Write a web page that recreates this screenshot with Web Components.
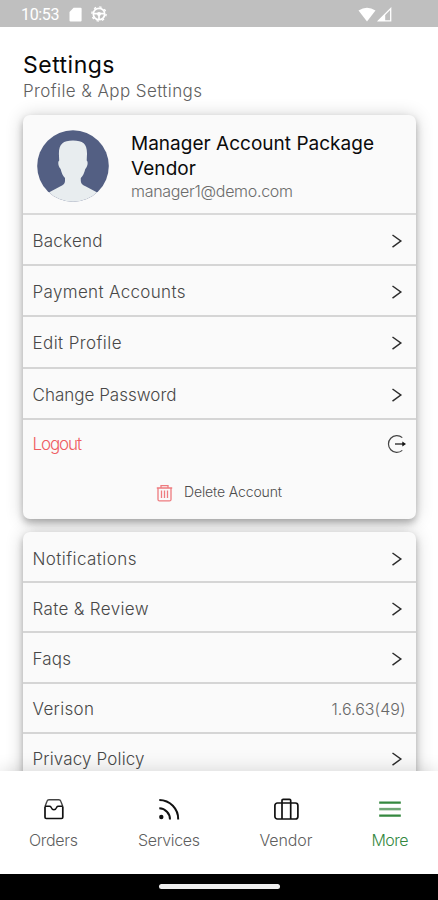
<!DOCTYPE html>
<html lang="en">
<head>
<meta charset="utf-8">
<title>Settings</title>
<style>
html,body{margin:0;padding:0;height:100%;overflow:hidden;background:#fff}
</style>
</head>
<body>
<settings-app></settings-app>
<script>
const define = (name, html, setup) => customElements.define(name, class extends HTMLElement {
  connectedCallback() {
    if (this.shadowRoot) return;
    const t = document.createElement('template');
    t.innerHTML = html;
    this.attachShadow({mode: 'open'}).append(t.content.cloneNode(true));
    if (setup) setup.call(this, this.shadowRoot);
  }
});

/* Single line of text, tracked so that it spans the given width. */
define('fit-text', `<style>
:host{display:block;white-space:nowrap}
span{display:inline-block}
</style><span><slot></slot></span>`, function (root) {
  const span = root.querySelector('span');
  const want = parseFloat(this.getAttribute('span'));
  const n = this.textContent.length;
  const gap = (want - span.getBoundingClientRect().width) / (n - 1);
  span.style.letterSpacing = gap + 'px';
  span.style.marginRight = -gap + 'px';
});

const icons = {
  chevron: [12, 16, '<path d="M1.5 2 9.8 8 1.5 14.2" fill="none" stroke="#2c2c2c" stroke-width="1.5"/>'],
  logout: [20, 20, '<path d="M15.3 3.6A8.4 8.4 0 1 0 15.3 16.4" fill="none" stroke="#444" stroke-width="1.2"/><path d="M8 10h8" stroke="#222" stroke-width="1.3"/><path d="M15.3 7.4 19 10l-3.7 2.6z" fill="#111"/>'],
  trash: [17, 18, '<g fill="none" stroke="#ee7b7f" stroke-width="1.3"><path d="M.8 4h15.4M5 3.6V1.7h7v1.9M2 4.2v11.2q0 1.5 1.5 1.5h10q1.5 0 1.5-1.5V4.2M5.5 6.6v7.5M8.5 6.6v7.5M11.5 6.6v7.5"/></g>'],
  orders: [22, 24, '<g fill="none" stroke="#111" stroke-width="1.7" stroke-linejoin="round"><path d="M2 9.5V20.2q0 1.3 1.3 1.3h15.2q1.3 0 1.3-1.3V9.5"/><path d="M2 9.5 4 4.2Q4.5 2.7 6 2.7h9.8q1.5 0 2 1.5l2 5.3" stroke="#444" stroke-width="1.4"/><path d="M2 9.3h4.4q1.2 0 1.800 1.100Q9 12.700 10.900 12.700t2.700-2.300q.6-1.100 1.800-1.100h4.400" stroke-width="1.400"/></g>'],
  services: [24, 24, '<g fill="none" stroke="#111" stroke-width="2"><path d="M2.3 3A19 19 0 0 1 21.2 22.5"/><path d="M2.3 11.3A11 11 0 0 1 13 22.5"/></g><circle cx="4.3" cy="20" r="2.2" fill="#111"/>'],
  vendor: [27, 24, '<g fill="none" stroke="#111" stroke-width="1.7"><rect x="1.9" y="6" width="23" height="16" rx="2.5"/><path d="M9 22V3.6q0-1.2 1.2-1.2h6.3q1.2 0 1.2 1.2V22"/></g>'],
  more: [24, 24, '<path d="M1.2 5.6h21.6M1.2 18.6h21.6" stroke="#34883f" stroke-width="2.1"/><path d="M1.2 12.1h21.6" stroke="#6fa775" stroke-width="2.5"/>'],
  avatar: [72, 72, '<defs><clipPath id="c"><circle cx="36" cy="36" r="35.8"/></clipPath></defs><g clip-path="url(#c)"><path d="M0 0h72v72H0z" fill="#535f83"/><path d="M36 10.5C26 10.5 21.8 14 21.9 24l.3 6.6c-1.8 1.4-.8 6.2 1.4 8.3 1 4.2 2.2 6.7 4.4 9 .2 5-.2 6.100-4 8L8 64.500v10.500h56v-10.500l-16-8.600c-3.800-1.900-4.400-3-4.200-8 2.200-2.300 3.500-4.800 4.500-9 2.200-2.100 3.200-6.900 1.400-8.300l.3-6.600C50.200 14 46 10.500 36 10.500z" fill="#e8edef"/></g>'],
  card: [13, 15, '<path d="M4.6.8h7q1 0 1 1v11.6q0 1-1 1H1.5q-1 0-1-1V5z" fill="#fff"/>'],
  debug: [16, 16, '<circle cx="8" cy="8" r="5.7" fill="none" stroke="#fff" stroke-width="1.7"/><circle cx="8" cy="8" r="7.1" fill="none" stroke="#fff" stroke-width="1.4" stroke-dasharray="2.4 3.18"/><path d="M3 7.6h10M8 8v5" stroke="#fff" stroke-width="1.7"/><circle cx="8" cy="8" r="2" fill="#fff"/>'],
  wifi: [18, 15, '<path d="M.5 3.6Q9-2 17.5 3.6L9 14.5z" fill="#fff"/>'],
  signal: [15, 15, '<path d="M1.5 13.8 13.7 1.6V13.8z" fill="none" stroke="#fff" stroke-width="1.3"/><path d="M1 14 8.2 7V14z" fill="#fff"/>']
};
define('ui-icon', '<style>:host{display:block;flex:none}svg{display:block}</style><div></div>', function (root) {
  const [w, h, body] = icons[this.getAttribute('name')];
  root.querySelector('div').innerHTML = `<svg width="${w}" height="${h}" viewBox="0 0 ${w} ${h}">${body}</svg>`;
});

define('status-bar', `<style>
:host{display:flex;align-items:center;height:27px;box-sizing:border-box;padding:1px 46px 0 21px;background:#bfbfbf;color:#fff;font:400 16px Roboto,sans-serif;flex:none}
.c{margin-left:9px}.d{margin-left:9.500px}.w{margin-left:auto}.s{margin-left:1px}
</style><fit-text span="38.500">10:53</fit-text><ui-icon class="c" name="card"></ui-icon><ui-icon class="d" name="debug"></ui-icon><ui-icon class="w" name="wifi"></ui-icon><ui-icon class="s" name="signal"></ui-icon>`);

define('page-heading', `<style>
:host{display:block;padding:25px 23px 0;height:63px}
h1,p{margin:0}
h1{font-size:23px;line-height:26px;font-weight:400;color:#080808}
p{font-size:17px;line-height:26px;color:#606060}
</style><h1><fit-text span="91.500">Settings</fit-text></h1><p><fit-text span="179">Profile &amp; App Settings</fit-text></p>`);

define('ui-card', `<style>
:host{display:block;margin:0 22.500px 13px 23px;background:#fafafa;border-radius:7px;box-shadow:0 4px 7px rgba(0,0,0,.26),0 1px 18px rgba(0,0,0,.19)}
</style><slot></slot>`);

define('profile-header', `<style>
:host{display:grid;grid-template-columns:72px 1fr;column-gap:22px;height:98px;padding:0 14px;border-bottom:2px solid #d9d9d9}
ui-icon{margin-top:14.500px}
.t{padding-top:16px;color:#0b0b0b;font-size:19px;line-height:25px;font-weight:400}
.m{color:#6c6c6c;font-size:16px;line-height:20px;font-weight:300}
</style><ui-icon name="avatar"></ui-icon><div class="t"><fit-text span="243">Manager Account Package</fit-text><fit-text span="65">Vendor</fit-text><div class="m"><fit-text span="162">manager1@demo.com</fit-text></div></div>`);

define('list-row', `<style>
:host{display:flex;align-items:center;justify-content:space-between;box-sizing:border-box;height:var(--row,51.200px);padding:3px 13px 0 9.500px;border-bottom:2px solid #d5d5d5;font-size:17px;color:#484848}
</style><slot></slot><slot name="end"></slot>`);

define('delete-action', `<style>
:host{display:flex;align-items:center;height:50px;padding-left:133px;font-size:14px;color:#4c4c4c}
ui-icon{margin:2px 11px 0 0}
</style><ui-icon name="trash"></ui-icon><fit-text span="98">Delete Account</fit-text>`);

define('nav-item', `<style>
:host{display:flex;flex-direction:column;align-items:center;gap:9px;font-size:16px;color:#5f5f5f;line-height:20px}
</style><slot name="icon"></slot><slot></slot>`);

define('bottom-nav', `<style>
:host{display:grid;grid-template-columns:107px 124px 110px 98px;height:103px;box-sizing:border-box;padding-top:26px;background:#fff;box-shadow:0 -2px 16px rgba(0,0,0,.13);z-index:1;flex:none}
nav-item.on{color:#34883f}
</style>
<nav-item><ui-icon slot="icon" name="orders"></ui-icon><fit-text span="49">Orders</fit-text></nav-item>
<nav-item><ui-icon slot="icon" name="services"></ui-icon><fit-text span="62">Services</fit-text></nav-item>
<nav-item><ui-icon slot="icon" name="vendor"></ui-icon><fit-text span="53">Vendor</fit-text></nav-item>
<nav-item class="on"><ui-icon slot="icon" name="more"></ui-icon><fit-text span="37">More</fit-text></nav-item>`);

define('gesture-bar', `<style>
:host{display:flex;justify-content:center;height:26px;background:#000;flex:none;z-index:2}
i{width:121px;height:5px;margin-top:10px;border-radius:3px;background:#eee}
</style><i></i>`);

const row = (text, width, end = '<ui-icon slot="end" name="chevron"></ui-icon>', attrs = '') =>
  `<list-row ${attrs}><fit-text span="${width}">${text}</fit-text>${end}</list-row>`;

define('settings-app', `<style>
:host{display:flex;flex-direction:column;height:900px;width:438px;background:#fff;font-family:Inter,"Liberation Sans",sans-serif;font-weight:300;overflow:hidden}
main{flex:1;min-height:0;overflow:hidden}
.second{--row:50.200px;--first:51.500px}
.second list-row:first-child{height:51.500px;padding-top:4px}
.logout{border-bottom:0;color:#ef5c61;height:47px;padding-right:9px;padding-top:1px}
.ver{font-size:16px;color:#686868}
</style>
<status-bar></status-bar>
<main>
<page-heading></page-heading>
<ui-card>
<profile-header></profile-header>
${row('Backend', 70)}${row('Payment Accounts', 153)}${row('Edit Profile', 89)}${row('Change Password', 144)}
${row('Logout', 49.5, '<ui-icon slot="end" name="logout"></ui-icon>', 'class="logout"')}
<delete-action></delete-action>
<div style="height:2px"></div>
</ui-card>
<ui-card class="second">
${row('Notifications', 104)}${row('Rate &amp; Review', 116)}${row('Faqs', 38.5)}
${row('Verison', 61.5, '<fit-text class="ver" slot="end" span="74">1.6.63(49)</fit-text>', 'style="padding-right:10px"')}
${row('Privacy Policy', 112)}
</ui-card>
</main>
<bottom-nav></bottom-nav>
<gesture-bar></gesture-bar>`);
</script>
</body>
</html>
